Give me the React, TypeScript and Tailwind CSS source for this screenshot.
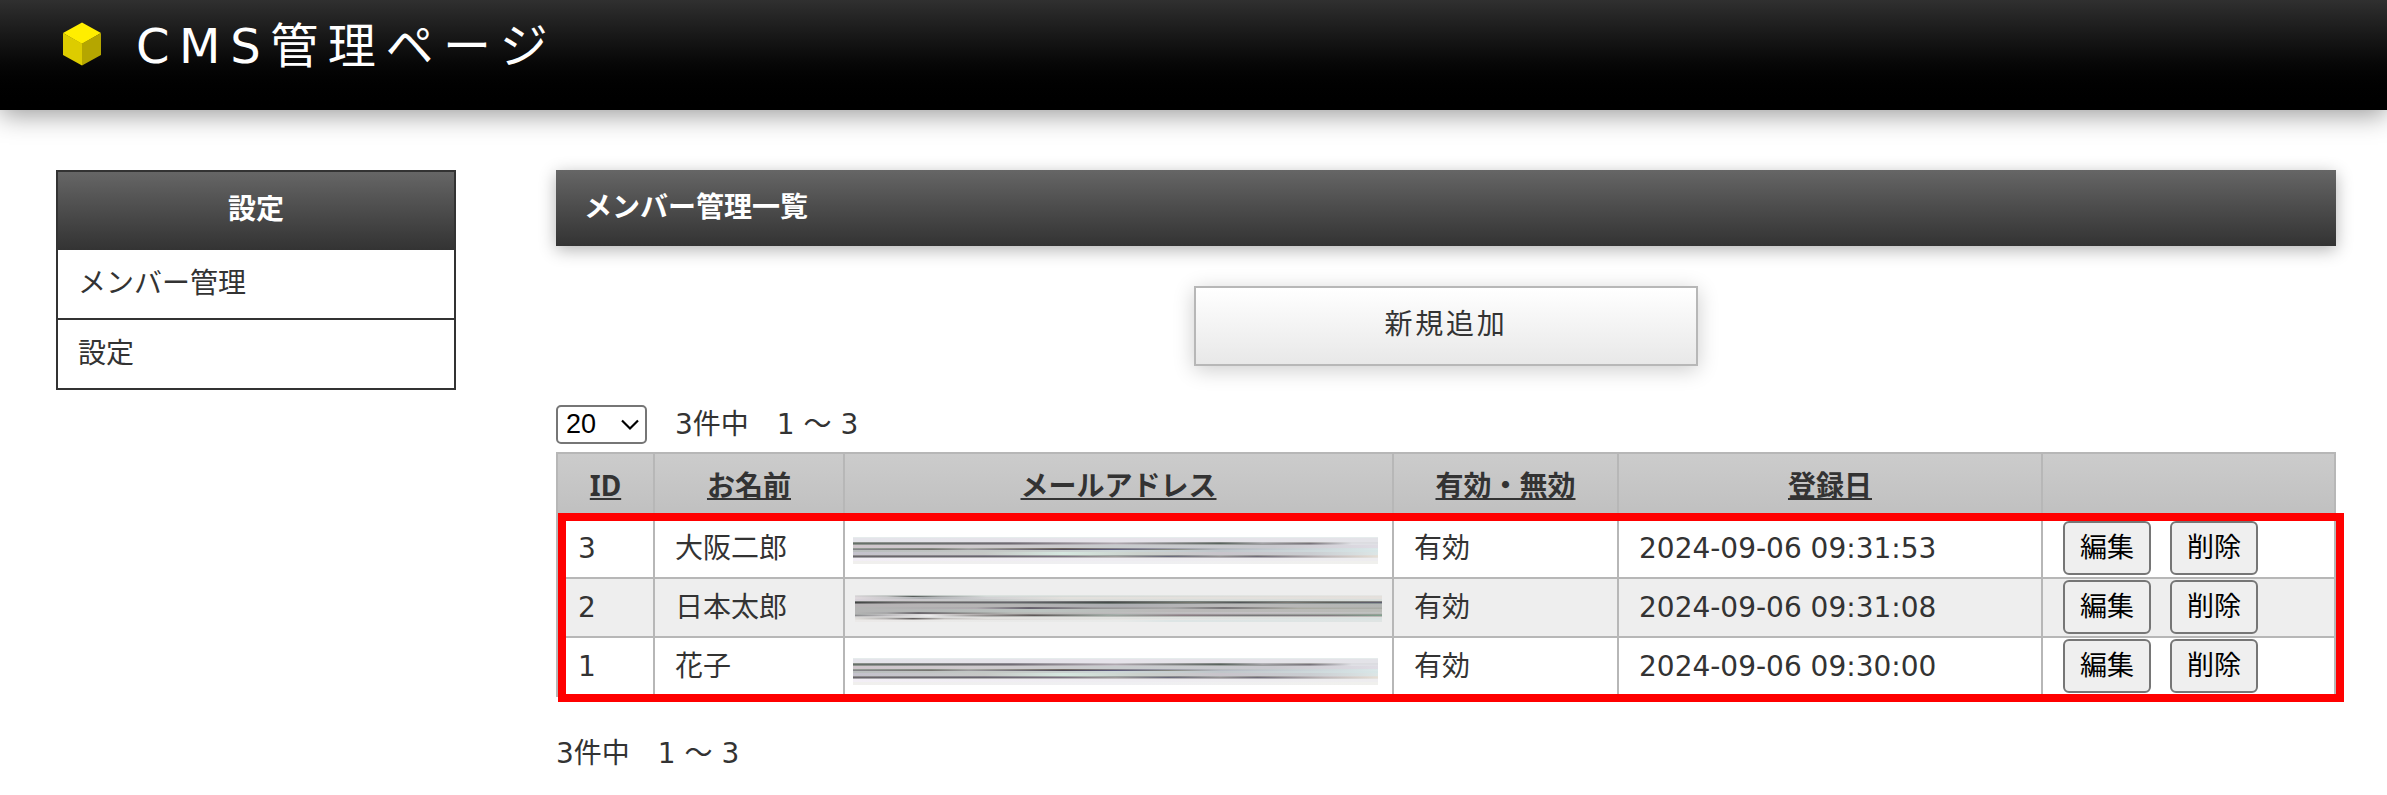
import { useState } from 'react';

type Member = {
  id: number;
  name: string;
  active: boolean;
  createdAt: string;
  mask: 'light' | 'dark';
  maskClass: string;
};

const members: Member[] = [
  { id: 3, name: '大阪二郎', active: true, createdAt: '2024-09-06 09:31:53', mask: 'light', maskClass: 'pt-1 pl-2 pr-[14px]' },
  { id: 2, name: '日本太郎', active: true, createdAt: '2024-09-06 09:31:08', mask: 'dark', maskClass: 'pt-[2px] px-[10px]' },
  { id: 1, name: '花子', active: true, createdAt: '2024-09-06 09:30:00', mask: 'light', maskClass: 'pt-[10px] pl-2 pr-[14px]' },
];

const columns = ['ID', 'お名前', 'メールアドレス', '有効・無効', '登録日'];
const menu = ['メンバー管理', '設定'];

// [y, height, [offset, colour][]]
type Stripe = [number, number, [number, string][]];

const lightStripes: Stripe[] = [
  [0, 1, [[0, '#e6ecec'], [1, '#e6ecec']]],
  [1, 4, [[0, '#e4e4ea'], [0.5, '#e6e3ea'], [1, '#e3e3e8']]],
  [5, 1, [[0, '#8b908a'], [0.3, '#8f8c93'], [0.5, '#c9c5cb'], [0.7, '#7f8480'], [0.78, '#b5b5b8'], [0.87, '#a5a3a3'], [0.95, '#dcdce0']]],
  [6, 1, [[0, '#66706a'], [0.3, '#716c75'], [0.5, '#b0a8b0'], [0.7, '#59635e'], [0.78, '#a09fa3'], [0.87, '#77737a'], [0.95, '#dcdde2']]],
  [7, 1, [[0, '#90958f'], [0.3, '#9a979c'], [0.5, '#c5c2c8'], [0.7, '#9ba09d'], [0.87, '#9d9aa0'], [0.95, '#e0e0e5']]],
  [8, 3, [[0, '#cfc6cc'], [0.3, '#cdcacd'], [0.5, '#c8cbcd'], [0.8, '#c9c8ce'], [1, '#dfdce4']]],
  [11, 1, [[0, '#959c96'], [0.15, '#858982'], [0.22, '#a8aaa6'], [0.4, '#6d6660'], [0.55, '#8d8c9a'], [0.7, '#b8bbbf'], [1, '#dae6e8']]],
  [12, 1, [[0, '#85858a'], [0.15, '#757470'], [0.22, '#9b999d'], [0.4, '#504a58'], [0.5, '#5d5c7d'], [0.6, '#84867e'], [0.7, '#b4b9c2'], [1, '#dbe8e9']]],
  [13, 2, [[0, '#b9bdbd'], [0.3, '#c5cac7'], [0.5, '#ccd6d6'], [0.7, '#c0c6ca'], [1, '#d8e6e7']]],
  [15, 3, [[0, '#c4c2cc'], [0.25, '#c6c8c6'], [0.4, '#d5e7df'], [0.55, '#cbd0cc'], [0.7, '#c8c4cb'], [0.87, '#cacdd1'], [1, '#dce6e6']]],
  [18, 1, [[0, '#8e8d8d'], [0.25, '#8a878f'], [0.45, '#a9b0ab'], [0.62, '#8b8c8f'], [0.7, '#abacad'], [0.77, '#939293'], [0.9, '#c8c5c8'], [1, '#e3e0da']]],
  [19, 1, [[0, '#6a656c'], [0.25, '#68656f'], [0.4, '#7c7281'], [0.5, '#9d9a9a'], [0.6, '#68687a'], [0.7, '#969194'], [0.77, '#706b78'], [0.9, '#bfb8b9'], [1, '#e6dfd5']]],
  [20, 1, [[0, '#a4a4a6'], [0.5, '#c0bebf'], [0.8, '#adabb0'], [1, '#e6e3df']]],
  [21, 3, [[0, '#f2eef5'], [0.5, '#eeecf1'], [1, '#eeedef']]],
  [24, 3, [[0, '#f0efed'], [0.5, '#efeff2'], [1, '#f0f0ed']]],
];

const darkStripes: Stripe[] = [
  [0, 1, [[0, '#dddddd'], [0.1, '#b9c0bd'], [0.25, '#dce2df'], [1, '#e5e6e4']]],
  [1, 1, [[0, '#d7d3d6'], [0.06, '#bfc0c0'], [0.11, '#555b58'], [0.16, '#9a9d9d'], [0.25, '#d3d9d7'], [1, '#e4dfdb']]],
  [2, 2, [[0, '#dfd9dd'], [0.08, '#c4c4c7'], [0.13, '#adb0b3'], [0.25, '#d1d1d3'], [0.4, '#e2e0dc'], [1, '#e4e0dc']]],
  [4, 2, [[0, '#d9d3da'], [0.1, '#cbc8cc'], [0.25, '#c5c8c9'], [0.4, '#dadcda'], [1, '#d9dedc']]],
  [6, 1, [[0, '#777a78'], [0.12, '#90918e'], [0.3, '#8b8c8e'], [0.48, '#646665'], [0.62, '#7a817d'], [0.8, '#7f8480'], [1, '#858783']]],
  [7, 1, [[0, '#414343'], [0.08, '#6a6669'], [0.3, '#66656b'], [0.48, '#454b49'], [0.64, '#77776f'], [0.73, '#525558'], [0.82, '#7b7873'], [0.9, '#60625e'], [1, '#5f5e70']]],
  [8, 1, [[0, '#777777'], [0.12, '#9b9b9b'], [0.3, '#909493'], [0.48, '#6c7471'], [0.7, '#8e9291'], [1, '#8c9696']]],
  [9, 3, [[0, '#b7b3b5'], [0.3, '#b6b5b5'], [0.5, '#acadb1'], [0.7, '#bbbaba'], [1, '#b3b5b3']]],
  [12, 1, [[0, '#b4b5b4'], [0.23, '#acabac'], [0.33, '#69646c'], [0.45, '#9d9b9e'], [0.6, '#a7a5a6'], [0.7, '#777476'], [0.84, '#b0b0ad'], [1, '#aeb0ac']]],
  [13, 1, [[0, '#b4b5b4'], [0.23, '#b0aab0'], [0.33, '#655e6d'], [0.45, '#929091'], [0.6, '#a5a7a7'], [0.7, '#7a777a'], [0.84, '#aaaaa1'], [1, '#a9aca6']]],
  [14, 3, [[0, '#b4b4b4'], [0.15, '#b4b7b6'], [0.35, '#bcc4c0'], [0.6, '#bab8b8'], [1, '#b9bbb7']]],
  [17, 1, [[0, '#b4b4b4'], [0.06, '#a8a8aa'], [0.12, '#706d72'], [0.2, '#989b99'], [0.3, '#b9bcb9'], [0.8, '#c5c1c5'], [1, '#bfc2c0']]],
  [18, 1, [[0, '#b2b4b3'], [0.06, '#a9a9a9'], [0.12, '#68656b'], [0.2, '#8b8787'], [0.3, '#b6b7b4'], [0.7, '#bfbbc0'], [1, '#b9bcba']]],
  [19, 1, [[0, '#a4a6a6'], [0.07, '#c5c4c6'], [0.13, '#e1dee0'], [0.2, '#c2bebe'], [0.33, '#807c7b'], [0.5, '#a6b0ab'], [0.62, '#9e9499'], [1, '#94a096']]],
  [20, 1, [[0, '#8b8c8e'], [0.07, '#c1bfc2'], [0.14, '#ededed'], [0.22, '#a4a09f'], [0.34, '#5e5857'], [0.48, '#9da7a1'], [0.62, '#8c7e84'], [0.75, '#77777a'], [0.9, '#827a80'], [1, '#7fa38e']]],
  [21, 1, [[0, '#c1bfc0'], [0.14, '#e8e7e8'], [0.25, '#b5b5b3'], [0.5, '#b7bbb7'], [1, '#bcb8b9']]],
  [22, 1, [[0, '#dbdad9'], [0.06, '#c9c8c8'], [0.14, '#dadada'], [0.3, '#e5e3e1'], [1, '#dde2e0']]],
  [23, 1, [[0, '#e1dfdc'], [0.06, '#b5b3b2'], [0.11, '#625e5e'], [0.17, '#c2bfbd'], [0.25, '#e4e2df'], [1, '#d9e3e2']]],
  [24, 1, [[0, '#e5e3e0'], [0.06, '#d3d0d0'], [0.11, '#a7a4a3'], [0.17, '#dad8d6'], [0.5, '#e7e6e4'], [1, '#dce4e4']]],
  [25, 2, [[0, '#ebe9e8'], [0.5, '#e8eae9'], [0.6, '#dde5e5'], [1, '#dfe4e3']]],
];

function CubeLogo() {
  return (
    <svg width="40" height="44" viewBox="0 0 40 44" aria-hidden="true">
      <path d="M20 0.5 L39 11 L20 22 L1 11 Z" fill="#ffee00" />
      <path d="M1 11 L20 21.5 V43.5 L1 33 Z" fill="#ddcc00" />
      <path d="M39 11 L20 21.5 V43.5 L39 33 Z" fill="#b5a600" />
    </svg>
  );
}

// Smeared bar that hides the mail address
function MaskedMail({ id, variant }: { id: number; variant: 'light' | 'dark' }) {
  const stripes = variant === 'dark' ? darkStripes : lightStripes;

  return (
    <svg className="block w-full" height="27" viewBox="0 0 526 27" preserveAspectRatio="none" aria-hidden="true">
      <defs>
        {stripes.map(([y, , stops]) => (
          <linearGradient key={y} id={`mask-${id}-${y}`}>
            {stops.map(([offset, color]) => (
              <stop key={offset} offset={offset} stopColor={color} />
            ))}
          </linearGradient>
        ))}
      </defs>
      {stripes.map(([y, height]) => (
        <rect key={y} y={y} width="526" height={height} fill={`url(#mask-${id}-${y})`} />
      ))}
    </svg>
  );
}

function App() {
  const [perPage, setPerPage] = useState('20');

  return (
    <div className="min-h-screen bg-white pb-6 font-['DejaVu_Sans','Noto_Sans_CJK_JP',sans-serif] text-[28px] leading-[42px] text-[#333]">
      <header className="flex h-[110px] items-start gap-[34px] bg-linear-to-b from-[#303030] to-black px-[62px] pt-2 text-white shadow-[0_5px_25px_rgba(0,0,0,0.4)]">
        <div className="flex h-[72px] items-center">
          <CubeLogo />
        </div>
        <h1 className="text-[48px] leading-[76px] tracking-[0.2em]">CMS管理ページ</h1>
      </header>

      <div className="flex items-start gap-[100px] pt-[60px] pr-[51px] pl-14">
        <nav className="w-[400px] shrink-0 border-2 border-b-0 border-[#333]">
          <h2 className="h-[78px] bg-linear-to-b from-[#666] to-[#333] pt-[17px] text-center font-bold text-white">設定</h2>
          <ul>
            {menu.map((item) => (
              <li key={item} className="border-b-2 border-[#333]">
                <a href="#" className="block h-[68px] px-5 pt-[13px]">{item}</a>
              </li>
            ))}
          </ul>
        </nav>

        <main className="min-w-0 flex-1">
          <h2 className="h-[76px] bg-linear-to-b from-[#666] to-[#333] px-7 pt-[17px] font-bold text-white shadow-[0_4px_16px_rgba(0,0,0,0.3)]">
            メンバー管理一覧
          </h2>

          <div className="mt-10 flex justify-center">
            <button className="h-20 w-[504px] border-2 border-[#b7b7b7] bg-linear-to-b from-white to-[#e8e8e8] pb-[2px] tracking-[0.1em] shadow-[0_4px_20px_rgba(0,0,0,0.2)]">
              新規追加
            </button>
          </div>

          <div className="mt-9 flex items-center gap-7">
            <div className="relative">
              <select
                aria-label="表示件数"
                value={perPage}
                onChange={(e) => setPerPage(e.target.value)}
                className="block h-[39px] w-[91px] appearance-none rounded-[5px] border-2 border-[#767676] bg-white pl-2 font-['Liberation_Sans',sans-serif] text-[27px] leading-[35px] text-black"
              >
                <option>20</option>
                <option>50</option>
                <option>100</option>
              </select>
              <svg className="pointer-events-none absolute top-[14px] right-2" width="18" height="12" viewBox="0 0 18 12" fill="none" aria-hidden="true">
                <path d="M1 1.5 L9 9.5 L17 1.5" stroke="black" strokeWidth="2.2" />
              </svg>
            </div>
            <p className="pt-[2px]">3件中　1 〜 3</p>
          </div>

          <div className="relative mt-[6px]">
            <table className="w-full table-fixed border-collapse">
              <colgroup>
                <col className="w-[97px]" />
                <col className="w-[190px]" />
                <col />
                <col className="w-[225px]" />
                <col className="w-[424px]" />
                <col className="w-[293px]" />
              </colgroup>
              <thead className="font-['Noto_Sans','Noto_Sans_CJK_JP',sans-serif]">
                <tr className="h-[66px] bg-linear-to-b from-[#ccc] to-[#bfbfbf]">
                  {columns.map((column) => (
                    <th key={column} className="border-2 border-[#b7b7b7] p-0 pb-[2px] font-bold">
                      <a href="#" className="underline">{column}</a>
                    </th>
                  ))}
                  <td className="border-2 border-[#b7b7b7]" />
                </tr>
              </thead>
              <tbody>
                {members.map((member) => (
                  <tr key={member.id} className="h-[59px] even:bg-[#eee]">
                    <td className="border-2 border-[#b7b7b7] px-5 py-0">{member.id}</td>
                    <td className="border-2 border-[#b7b7b7] px-5 py-0">{member.name}</td>
                    <td className="border-2 border-[#b7b7b7] p-0">
                      <div className={member.maskClass}>
                        <MaskedMail id={member.id} variant={member.mask} />
                      </div>
                    </td>
                    <td className="border-2 border-[#b7b7b7] px-5 py-0">{member.active ? '有効' : '無効'}</td>
                    <td className="border-2 border-[#b7b7b7] px-5 py-0">{member.createdAt}</td>
                    <td className="border-2 border-[#b7b7b7] px-5 py-0">
                      <div className="flex gap-[19px] pb-[2px] text-[27px] leading-[50px] text-black">
                        <button className="h-[54px] w-[88px] rounded-md border-2 border-[#767676] bg-[#efefef]">編集</button>
                        <button className="h-[54px] w-[88px] rounded-md border-2 border-[#767676] bg-[#efefef]">削除</button>
                      </div>
                    </td>
                  </tr>
                ))}
              </tbody>
            </table>
            {/* red frame around the member rows */}
            <div className="pointer-events-none absolute top-[61px] -right-2 -bottom-[5px] left-[2px] border-8 border-[#f00]" />
          </div>

          <p className="mt-9">3件中　1 〜 3</p>
        </main>
      </div>
    </div>
  );
}

export default App;
